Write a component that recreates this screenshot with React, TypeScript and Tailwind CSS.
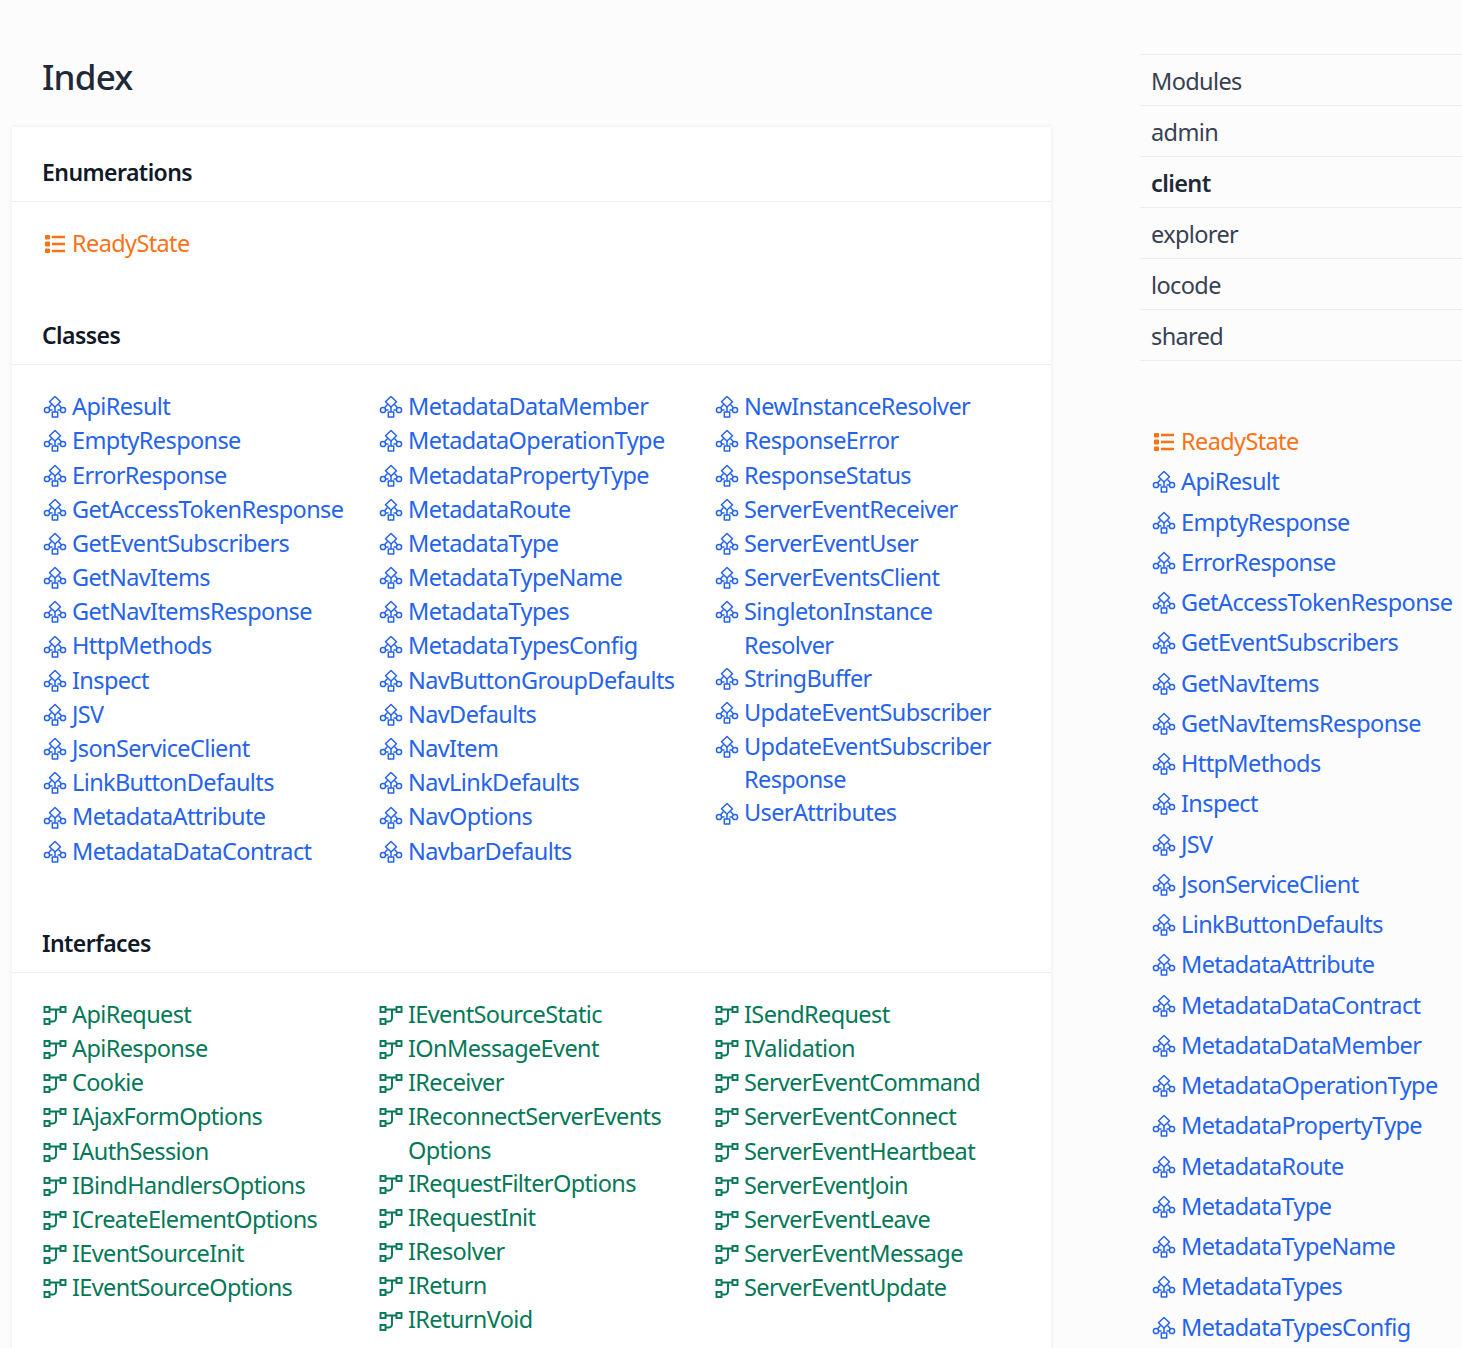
import React from "react";

const ClassIcon = () => (
  <svg viewBox="0 0 24 24" className="w-6 h-6 shrink-0 text-[#2563eb]" fill="none" stroke="currentColor" strokeWidth="1.5" strokeLinejoin="round">
    <path d="M12 1.5 L17.5 6.7 L12 12 L6.5 6.7 Z" />
    <circle cx="4" cy="15" r="2.6" />
    <circle cx="20" cy="15" r="2.6" />
    <rect x="9.3" y="17" width="5.4" height="5" />
    <path d="M8.5 9.5 L5.5 12.8 M15.5 9.5 L18.5 12.8 M12 12 V17 M6.6 15 H9.5 M17.4 15 H14.5" />
  </svg>
);
const IfaceIcon = () => (
  <svg viewBox="0 0 24 24" className="w-6 h-6 shrink-0 text-[#047857]" fill="none" stroke="currentColor" strokeWidth="1.9">
    <rect x="1.5" y="4" width="5" height="5" />
    <rect x="17.5" y="4" width="5" height="5" />
    <rect x="1.5" y="16" width="5" height="5" />
    <path d="M6.5 6.5 H17.5 M13 6.5 V15 Q13 18.5 9.5 18.5 H6.5" />
  </svg>
);
const EnumIcon = () => (
  <svg viewBox="0 0 24 24" className="w-6 h-6 shrink-0 text-[#f97316]" fill="none" stroke="currentColor" strokeWidth="2.3">
    <path d="M9 5 H22 M9 12 H22 M9 19 H22" />
    <path d="M2.5 3.5 H6.5 V7 H2.5 Z M2.5 10 H6.5 V14 H2.5 Z M2.5 17 H6.5 V20.5 H2.5 Z" fill="currentColor" strokeWidth="1" />
  </svg>
);

type Kind = "class" | "iface" | "enum";
const colors: Record<Kind, string> = { class: "text-[#2563eb]", iface: "text-[#047857]", enum: "text-[#f97316]" };
const Icon = ({ kind }: { kind: Kind }) => kind === "class" ? <ClassIcon /> : kind === "iface" ? <IfaceIcon /> : <EnumIcon />;

const Item = ({ kind, name, second }: { kind: Kind; name: string; second?: string }) => (
  <li className={colors[kind]}>
    <a className="flex items-center h-[34.2px] whitespace-nowrap">
      <span className="ml-[1px] mr-[5px] flex"><Icon kind={kind} /></span>
      <span className="pb-[1px]">{name}</span>
    </a>
    {second && <div className="pl-[30px] h-[32.2px] leading-[31.2px]">{second}</div>}
  </li>
);

const Col = ({ kind, items }: { kind: Kind; items: (string | [string, string])[] }) => (
  <ul className="w-[336px]">
    {items.map((i) => typeof i === "string" ? <Item key={i} kind={kind} name={i} /> : <Item key={i[0]} kind={kind} name={i[0]} second={i[1]} />)}
  </ul>
);

const Section = ({ title, kind, cols }: { title: string; kind: Kind; cols: (string | [string, string])[][] }) => (
  <section>
    <h3 className="px-[30px] pt-[29px] pb-[12px] h-[75px] leading-[32px] text-[23px] font-semibold text-[#111827] border-b border-[#eeeeee] tracking-[-0.55px]">{title}</h3>
    <div className="flex pl-[30px] pt-[25px] pb-[29px]">
      {cols.map((c, i) => <Col key={i} kind={kind} items={c} />)}
    </div>
  </section>
);

const classes: (string | [string, string])[][] = [
  ["ApiResult","EmptyResponse","ErrorResponse","GetAccessTokenResponse","GetEventSubscribers","GetNavItems","GetNavItemsResponse","HttpMethods","Inspect","JSV","JsonServiceClient","LinkButtonDefaults","MetadataAttribute","MetadataDataContract"],
  ["MetadataDataMember","MetadataOperationType","MetadataPropertyType","MetadataRoute","MetadataType","MetadataTypeName","MetadataTypes","MetadataTypesConfig","NavButtonGroupDefaults","NavDefaults","NavItem","NavLinkDefaults","NavOptions","NavbarDefaults"],
  ["NewInstanceResolver","ResponseError","ResponseStatus","ServerEventReceiver","ServerEventUser","ServerEventsClient",["SingletonInstance","Resolver"],"StringBuffer","UpdateEventSubscriber",["UpdateEventSubscriber","Response"],"UserAttributes"],
];
const ifaces: (string | [string, string])[][] = [
  ["ApiRequest","ApiResponse","Cookie","IAjaxFormOptions","IAuthSession","IBindHandlersOptions","ICreateElementOptions","IEventSourceInit","IEventSourceOptions"],
  ["IEventSourceStatic","IOnMessageEvent","IReceiver",["IReconnectServerEvents","Options"],"IRequestFilterOptions","IRequestInit","IResolver","IReturn","IReturnVoid"],
  ["ISendRequest","IValidation","ServerEventCommand","ServerEventConnect","ServerEventHeartbeat","ServerEventJoin","ServerEventLeave","ServerEventMessage","ServerEventUpdate"],
];
const side = ["ApiResult","EmptyResponse","ErrorResponse","GetAccessTokenResponse","GetEventSubscribers","GetNavItems","GetNavItemsResponse","HttpMethods","Inspect","JSV","JsonServiceClient","LinkButtonDefaults","MetadataAttribute","MetadataDataContract","MetadataDataMember","MetadataOperationType","MetadataPropertyType","MetadataRoute","MetadataType","MetadataTypeName","MetadataTypes","MetadataTypesConfig"];
const mods = ["Modules","admin","client","explorer","locode","shared"];

const SideItem = ({ kind, name }: { kind: Kind; name: string }) => (
  <li className={`flex items-center h-[40.25px] whitespace-nowrap ${colors[kind]}`}>
    <span className="ml-[1px] mr-[5px] flex"><Icon kind={kind} /></span>
    <span className="pb-[1px]">{name}</span>
  </li>
);

export default function App() {
  return (
    <div className="h-[1348px] overflow-hidden bg-[#fcfcfc] flex text-[23.5px] font-['Noto_Sans','Open_Sans',sans-serif] tracking-[-0.62px]">
      <main className="ml-[12px] w-[1039px] shrink-0">
        <h2 className="pl-[30px] pt-[50px] h-[127px] text-[35px] leading-[54px] font-medium text-[#1f2937] tracking-[-0.8px]">Index</h2>
        <div className="bg-white shadow-[0_0_5px_rgba(0,0,0,0.07)]">
          <Section title="Enumerations" kind="enum" cols={[["ReadyState"]]} />
          <Section title="Classes" kind="class" cols={classes} />
          <Section title="Interfaces" kind="iface" cols={ifaces} />
        </div>
      </main>
      <aside className="ml-[89px] flex-1 min-w-0 pt-[54px]">
        <ul className="border-t border-[#eeeeee] text-[#374151]">
          {mods.map((m) => (
            <li key={m} className={`h-[51px] border-b border-[#eeeeee] pl-[11px] leading-[52px] ${m === "client" ? "font-semibold text-[#1f2937]" : ""}`}>{m}</li>
          ))}
        </ul>
        <ul className="pl-[11px] mt-[61px]">
          <SideItem kind="enum" name="ReadyState" />
          {side.map((s) => <SideItem key={s} kind="class" name={s} />)}
        </ul>
      </aside>
    </div>
  );
}
